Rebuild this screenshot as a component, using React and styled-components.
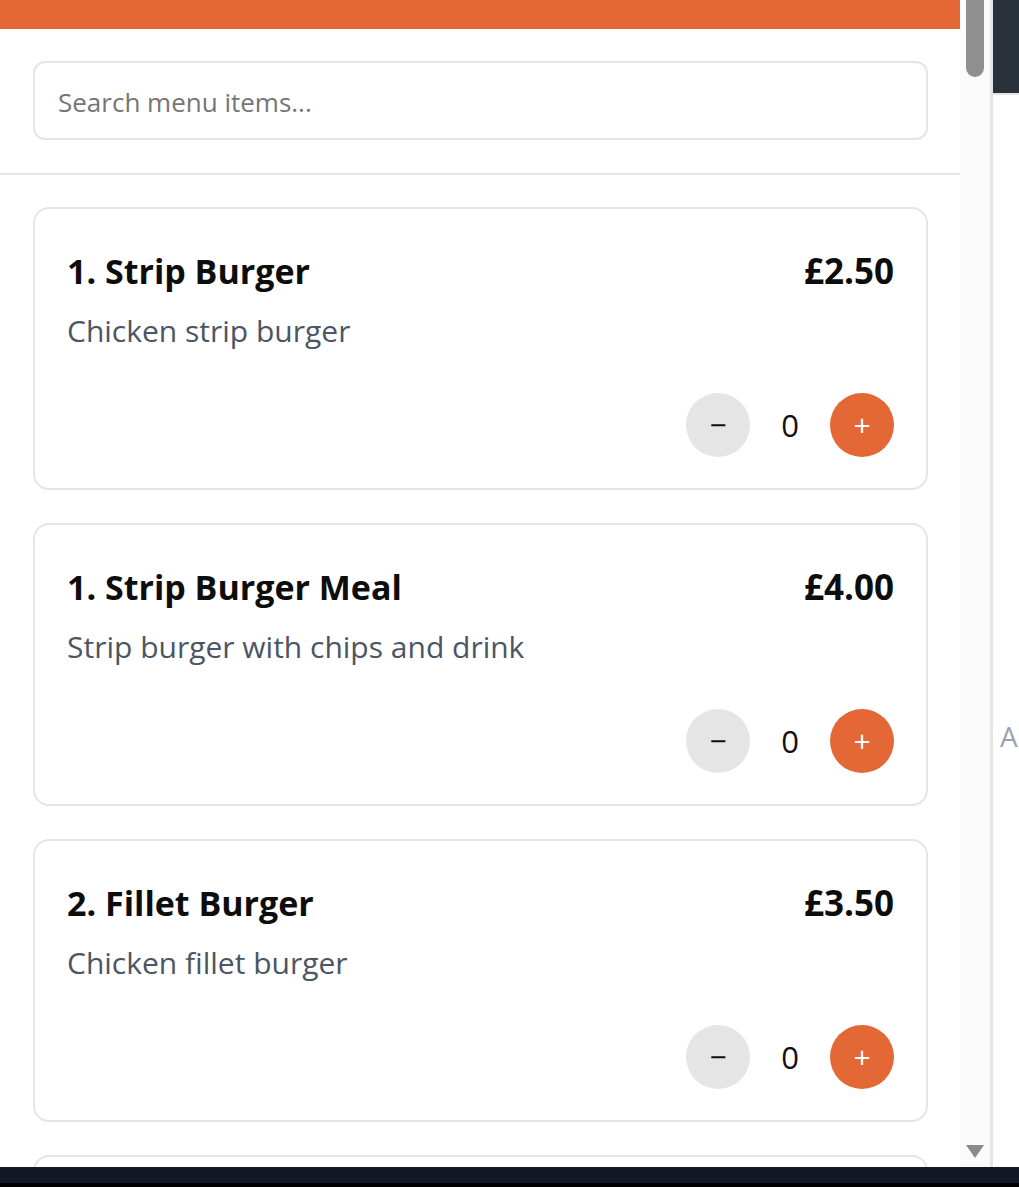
import React from 'react';
import styled, { createGlobalStyle } from 'styled-components';

const Global = createGlobalStyle`
  html, body { margin: 0; padding: 0; background: #fff; }
  body { font-family: "Open Sans", "Noto Sans", Arial, sans-serif; }
  * { box-sizing: border-box; }
`;

const items = [
  { id: 1, name: '1. Strip Burger', desc: 'Chicken strip burger', price: '£2.50' },
  { id: 2, name: '1. Strip Burger Meal', desc: 'Strip burger with chips and drink', price: '£4.00' },
  { id: 3, name: '2. Fillet Burger', desc: 'Chicken fillet burger', price: '£3.50' },
  { id: 4, name: '2. Fillet Burger Meal', desc: 'Fillet burger with chips and drink', price: '£5.00' },
];

export default function App() {
  return (
    <>
      <Global />
      <Screen>
        <Body>
          <Main>
            <TopBar />
            <SearchBar>
              <SearchInput placeholder="Search menu items..." />
            </SearchBar>
            <List>
              {items.map(it => (
                <Card key={it.id}>
                  <CardHead>
                    <Title>{it.name}</Title>
                    <Price>{it.price}</Price>
                  </CardHead>
                  <Desc>{it.desc}</Desc>
                  <Controls>
                    <RoundBtn aria-label="remove">−</RoundBtn>
                    <Count>0</Count>
                    <RoundBtn $primary aria-label="add">+</RoundBtn>
                  </Controls>
                </Card>
              ))}
            </List>
          </Main>
          <Track>
            <Thumb />
            <Arrow />
          </Track>
          <Side>
            <SideHead />
            <SideEmpty>Add items to your order</SideEmpty>
          </Side>
        </Body>
        <Footer />
        <Edge />
      </Screen>
    </>
  );
}

const Screen = styled.div`
  width: 1019px; height: 1187px; overflow: hidden;
  display: flex; flex-direction: column;
`;
const Body = styled.div`
  display: flex; height: 1167px; min-height: 0;
`;
const Main = styled.div`
  width: 960px; display: flex; flex-direction: column; overflow: hidden; background: #fff;
`;
const TopBar = styled.div`
  height: 29px; flex: none; background: #e46836;
`;
const SearchBar = styled.div`
  padding: 32px 32px 33px 33px; border-bottom: 2px solid #e5e5e5; flex: none;
`;
const SearchInput = styled.input`
  width: 100%; height: 79px; border: 2px solid #e5e5e5; border-radius: 12px;
  padding: 2px 23px 0; font: 400 26px "Open Sans", "Noto Sans", sans-serif; color: #222;
  outline: none;
  &::placeholder { color: #757575; }
`;
const List = styled.div`
  flex: 1; min-height: 0; overflow: hidden;
  padding: 32px 32px 0 33px; display: flex; flex-direction: column; gap: 33px;
`;
const Card = styled.div`
  flex: none; height: 283px; border: 2px solid #e5e5e5; border-radius: 16px;
  padding: 32px 32px 31px; display: flex; flex-direction: column;
`;
const CardHead = styled.div`
  display: flex; justify-content: space-between; align-items: baseline;
`;
const Title = styled.h3`
  margin: 0; font-size: 34px; font-weight: 700; line-height: 60px; color: #0d0d0d;
`;
const Price = styled.span`
  font-size: 35px; font-weight: 700; color: #0d0d0d;
`;
const Desc = styled.p`
  margin: 9px 0 0; font-size: 30px; line-height: 42px; color: #4b5563;
`;
const Controls = styled.div`
  margin-top: auto; display: flex; justify-content: flex-end; align-items: center; gap: 16px;
`;
const RoundBtn = styled.button`
  width: 64px; height: 64px; border-radius: 50%; border: none; padding: 0;
  display: flex; align-items: center; justify-content: center;
  font: 400 30px "Open Sans", sans-serif; line-height: 1;
  background: ${p => (p.$primary ? '#e46836' : '#e5e5e5')};
  color: ${p => (p.$primary ? '#fff' : '#111')};
`;
const Count = styled.span`
  width: 48px; text-align: center; font-size: 31px; color: #111;
`;
const Track = styled.div`
  width: 30px; flex: none; background: #fbfbfb; display: flex; flex-direction: column;
  align-items: center; padding-bottom: 9px;
`;
const Thumb = styled.div`
  width: 18px; height: 77px; background: #8f8f8f; border-radius: 0 0 9px 9px;
`;
const Arrow = styled.div`
  margin-top: auto; width: 0; height: 0;
  border-left: 9px solid transparent; border-right: 9px solid transparent;
  border-top: 13px solid #8a8a8a;
`;
const Side = styled.div`
  flex: 1; border-left: 3px solid #e5e5e5; background: #fff; overflow: hidden;
  display: flex; flex-direction: column;
`;
const SideHead = styled.div`
  height: 95px; flex: none; background: #29313a; border-bottom: 2px solid #e5e5e5;
`;
const SideEmpty = styled.div`
  margin-top: 622px; padding-left: 7px; white-space: nowrap;
  font-size: 28px; color: #9ca3af;
`;
const Footer = styled.div`
  height: 16px; flex: none; background: #121826;
`;
const Edge = styled.div`
  flex: 1; background: #000;
`;
